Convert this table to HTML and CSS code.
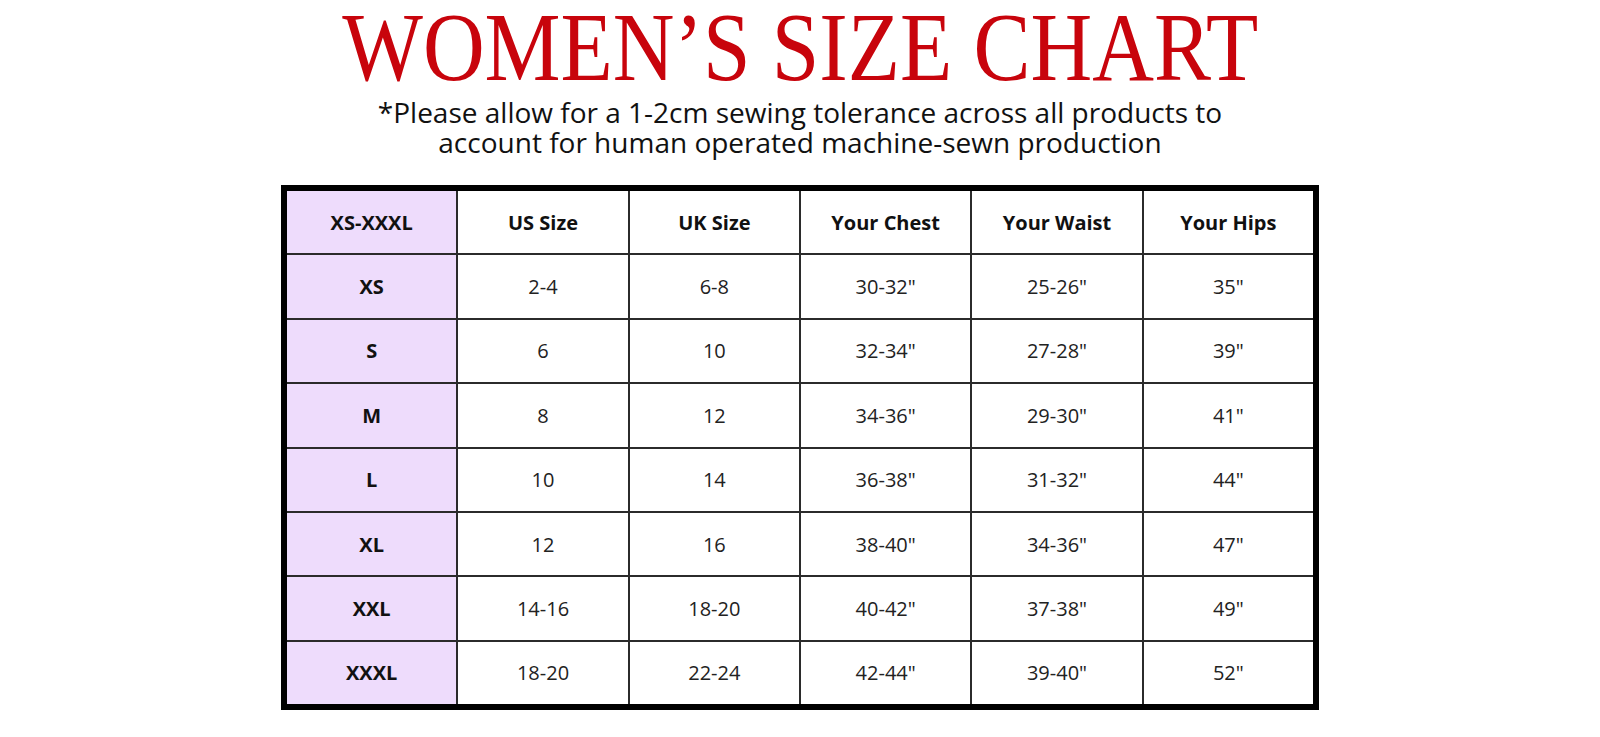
FILE: index.html
```html
<!DOCTYPE html>
<html lang="en">
<head>
<meta charset="utf-8">
<title>Women's Size Chart</title>
<link rel="stylesheet" href="styles.css">
</head>
<body>
<main class="page">
  <header class="heading">
    <h1 class="title"><span class="title-text">WOMEN’S SIZE CHART</span></h1>
    <p class="note">*Please allow for a 1-2cm sewing tolerance across all products to<br>account for human operated machine-sewn production</p>
  </header>
  <div class="chart">
    <div class="cell size head">XS-XXXL</div>
    <div class="cell head">US Size</div>
    <div class="cell head">UK Size</div>
    <div class="cell head">Your Chest</div>
    <div class="cell head">Your Waist</div>
    <div class="cell head">Your Hips</div>

    <div class="cell size">XS</div><div class="cell">2-4</div><div class="cell">6-8</div><div class="cell">30-32"</div><div class="cell">25-26"</div><div class="cell">35"</div>
    <div class="cell size">S</div><div class="cell">6</div><div class="cell">10</div><div class="cell">32-34"</div><div class="cell">27-28"</div><div class="cell">39"</div>
    <div class="cell size">M</div><div class="cell">8</div><div class="cell">12</div><div class="cell">34-36"</div><div class="cell">29-30"</div><div class="cell">41"</div>
    <div class="cell size">L</div><div class="cell">10</div><div class="cell">14</div><div class="cell">36-38"</div><div class="cell">31-32"</div><div class="cell">44"</div>
    <div class="cell size">XL</div><div class="cell">12</div><div class="cell">16</div><div class="cell">38-40"</div><div class="cell">34-36"</div><div class="cell">47"</div>
    <div class="cell size">XXL</div><div class="cell">14-16</div><div class="cell">18-20</div><div class="cell">40-42"</div><div class="cell">37-38"</div><div class="cell">49"</div>
    <div class="cell size">XXXL</div><div class="cell">18-20</div><div class="cell">22-24</div><div class="cell">42-44"</div><div class="cell">39-40"</div><div class="cell">52"</div>
  </div>
</main>
</body>
</html>
```
FILE: styles.css
```css
html, body {
  margin: 0;
  padding: 0;
  background: #ffffff;
}

.page {
  width: 1600px;
  height: 737px;
  display: flex;
  flex-direction: column;
  align-items: center;
  overflow: hidden;
}

.heading {
  display: flex;
  flex-direction: column;
  align-items: center;
  height: 185px;
}

.title {
  margin: 0;
  height: 94px;
  font-family: "Liberation Serif", "Times New Roman", serif;
  font-weight: 400;
  font-size: 98px;
  line-height: 94px;
  color: #c8040c;
  white-space: nowrap;
}

.title-text {
  display: inline-block;
  transform: scaleX(0.872);
  transform-origin: center;
}

.note {
  margin: 3px 0 0;
  font-family: "Open Sans", "Lato", sans-serif;
  font-size: 28px;
  line-height: 30px;
  color: #111111;
  text-align: center;
}

.chart {
  width: 1026px;
  border: 6px solid #000000;
  background: #2b2b2b;
  display: grid;
  grid-template-columns: repeat(6, 1fr);
  grid-auto-rows: 62.4px;
  gap: 2px;
}

.cell {
  background: #ffffff;
  display: flex;
  align-items: center;
  justify-content: center;
  font-family: "Open Sans", "Liberation Sans", sans-serif;
  font-size: 20px;
  color: #222222;
}

.size {
  background: #eedcfc;
  font-weight: 700;
  color: #111111;
}

.head {
  font-weight: 700;
  color: #111111;
}
```
